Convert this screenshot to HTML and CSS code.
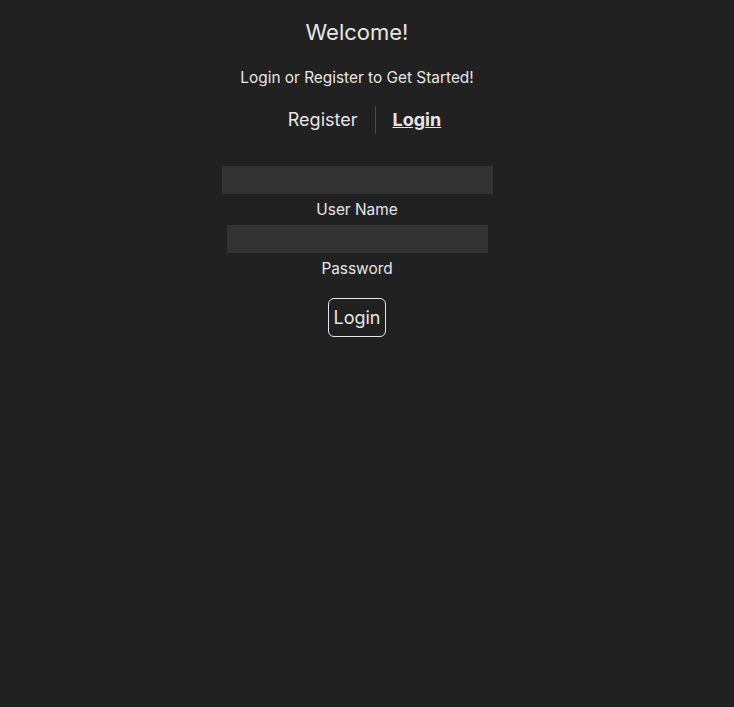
FILE: index.html
```html
<!DOCTYPE html>
<html>
<head>
<meta charset="utf-8">
<link rel="stylesheet" href="styles.css">
</head>
<body>
<main class="page">
  <h1 class="title">Welcome!</h1>
  <p class="subtitle">Login or Register to Get Started!</p>
  <nav class="tabs">
    <span class="tab">Register</span>
    <span class="divider"></span>
    <span class="tab active">Login</span>
  </nav>
  <form class="form">
    <input class="field field-user" type="text">
    <label class="label">User Name</label>
    <input class="field field-pass" type="password">
    <label class="label">Password</label>
    <button class="btn" type="button">Login</button>
  </form>
</main>
</body>
</html>
```
FILE: styles.css
```css
html, body {
  margin: 0;
  padding: 0;
  background: #212121;
  color: #e6e6e6;
  font-family: Inter, "Noto Sans", sans-serif;
}
.page {
  width: 714px;
  display: flex;
  flex-direction: column;
  align-items: center;
  padding-top: 18px;
}
.title {
  margin: 0;
  font-size: 22px;
  font-weight: 400;
  line-height: 28px;
}
.subtitle {
  margin: 22px 0 0;
  font-size: 15.4px;
  line-height: 20px;
}
.tabs {
  display: flex;
  align-items: center;
  margin-top: 17px;
  margin-left: 15px;
  height: 30px;
}
.tab {
  font-size: 18px;
  line-height: 24px;
  padding: 0 17px;
}
.tab.active {
  font-weight: 700;
  text-decoration: underline;
}
.divider {
  width: 1px;
  height: 28px;
  background: #4a4a4a;
}
.form {
  display: flex;
  flex-direction: column;
  align-items: center;
  margin-top: 31px;
}
.field {
  box-sizing: border-box;
  height: 28px;
  border: none;
  background: #333333;
  color: #e6e6e6;
  padding: 0 6px;
  outline: none;
}
.field-user { width: 271px; }
.field-pass { width: 261px; }
.label {
  font-size: 15.4px;
  line-height: 20px;
  margin: 6px 0 5px;
}
.btn {
  margin-top: 14px;
  box-sizing: border-box;
  height: 39px;
  padding: 0 4px;
  background: transparent;
  color: #e6e6e6;
  border: 1px solid #e6e6e6;
  border-radius: 6px;
  font-family: Inter, "Noto Sans", sans-serif;
  font-size: 18px;
}
```
